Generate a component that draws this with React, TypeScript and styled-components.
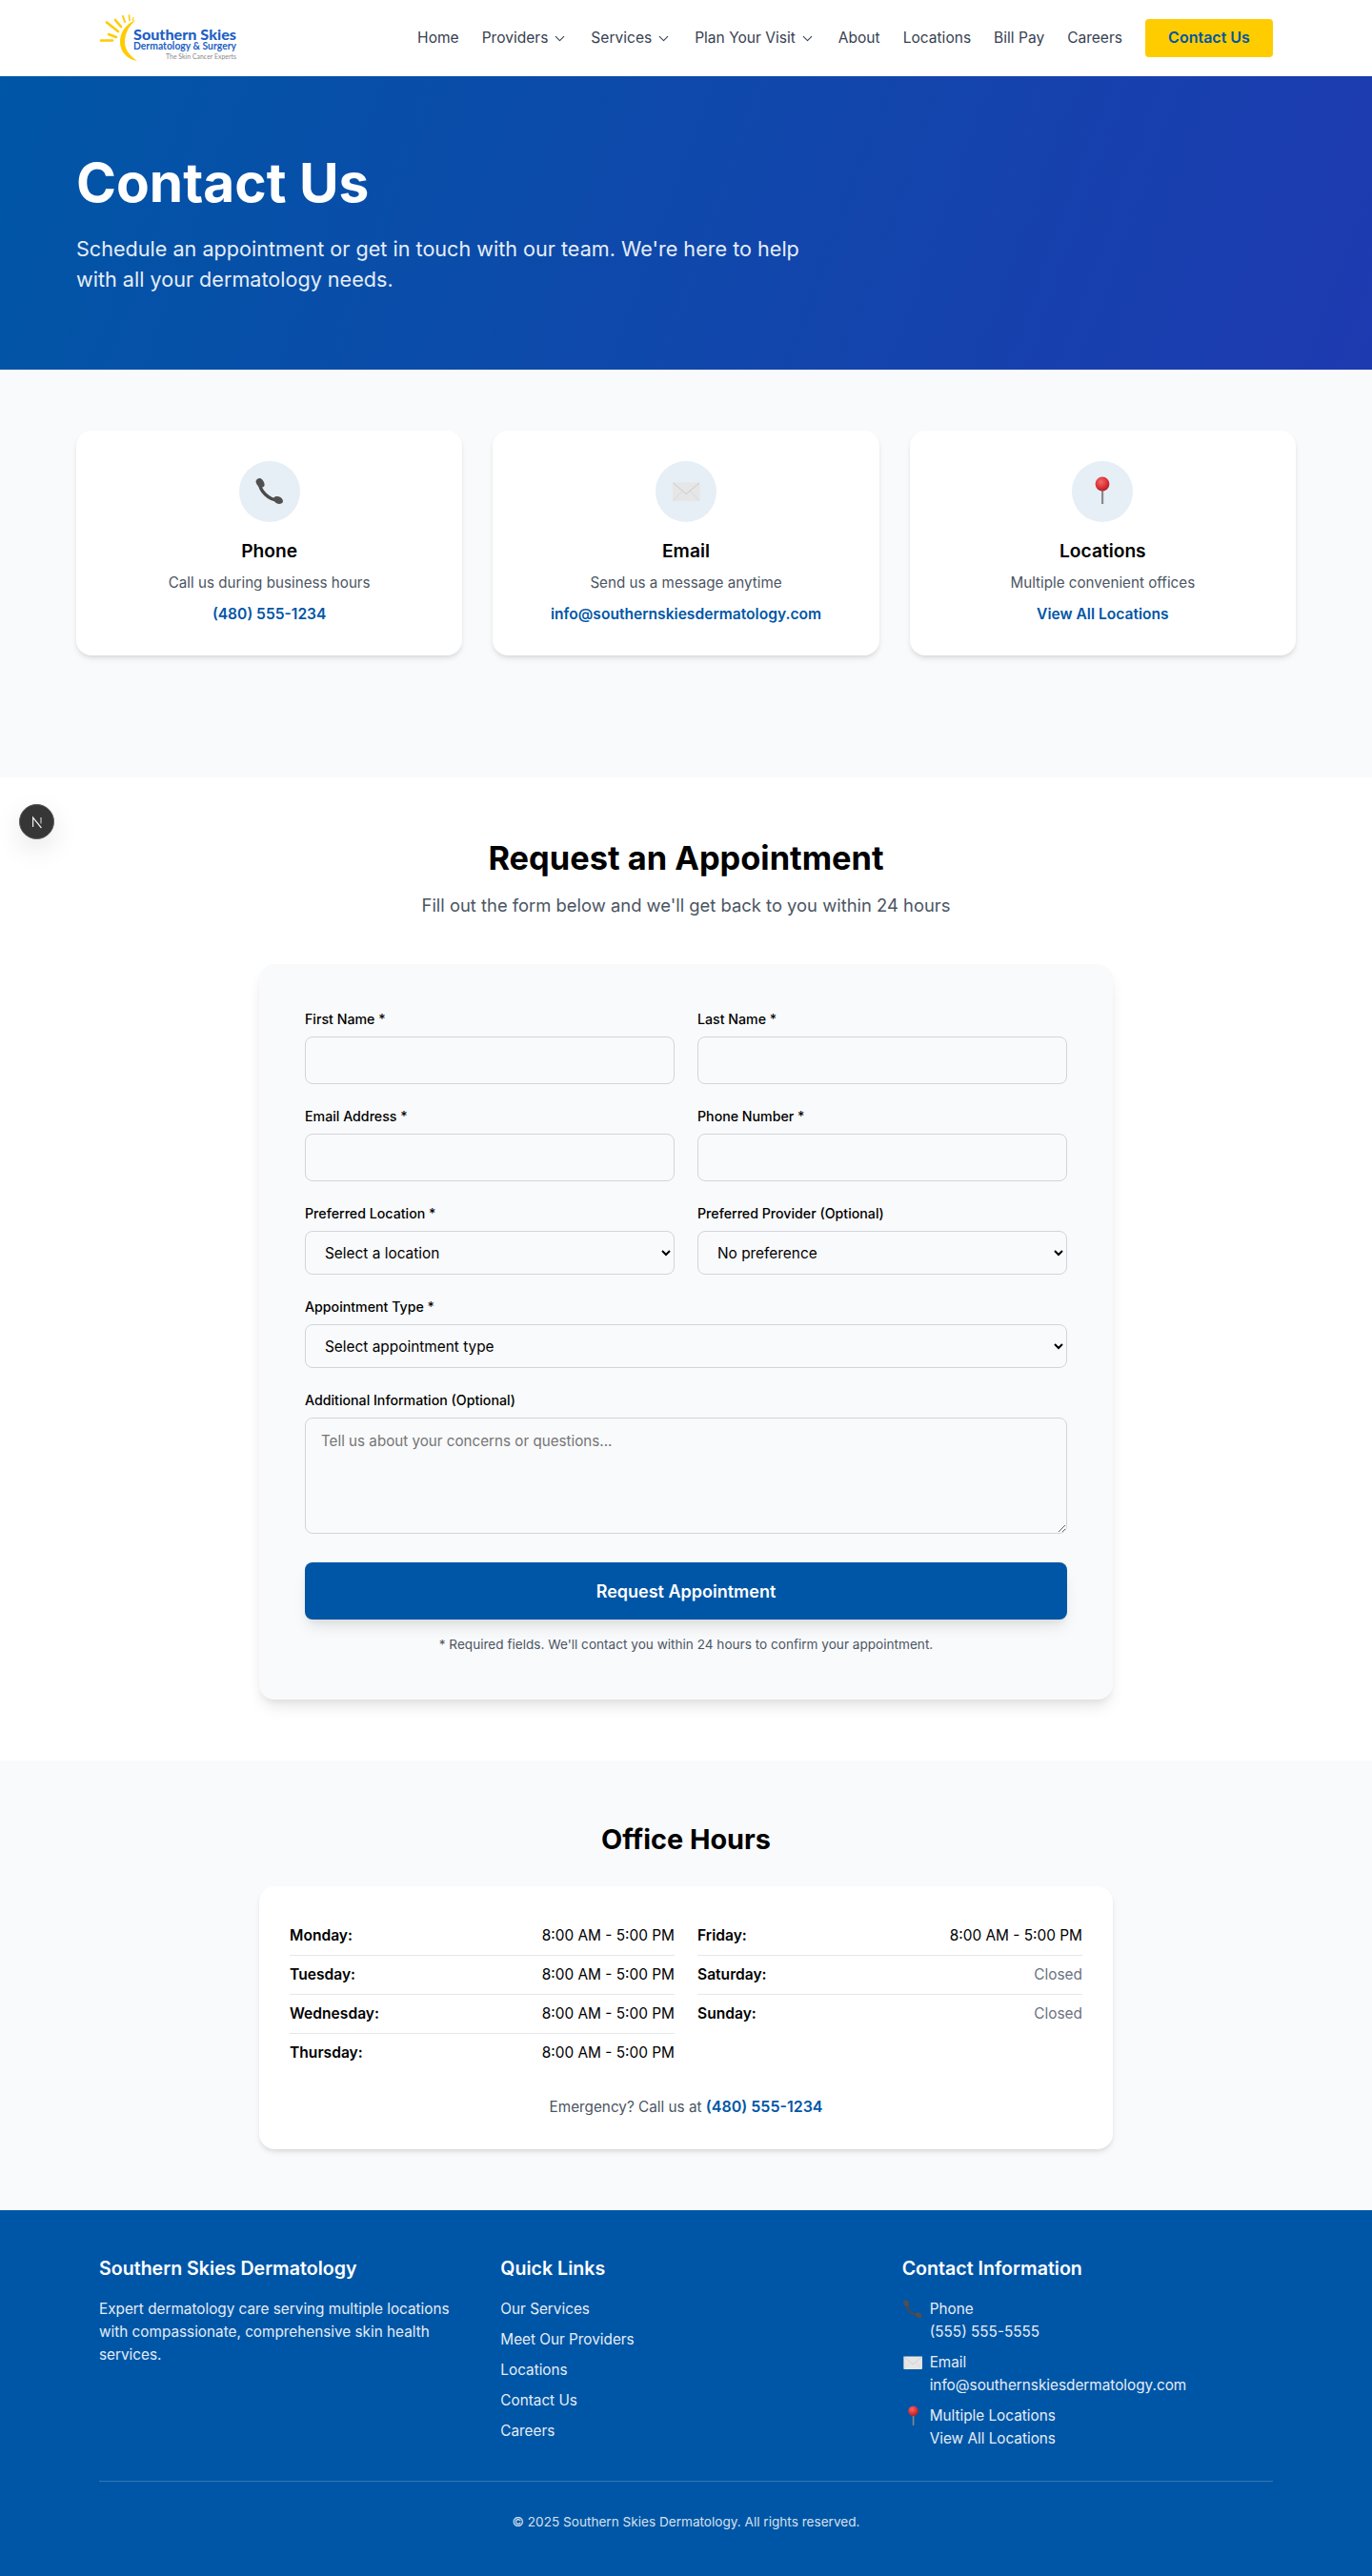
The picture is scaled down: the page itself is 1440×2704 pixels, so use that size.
import React from 'react';
import styled, { createGlobalStyle } from 'styled-components';
import { ChevronDown } from 'lucide-react';

const Global = createGlobalStyle`
  * { box-sizing: border-box; }
  html, body { margin: 0; padding: 0; }
  body {
    font-family: Inter, "Liberation Sans", sans-serif;
    font-size: 15.2px;
    line-height: 1.6;
    color: #000;
    background: #fff;
  }
  h1, h2, h3, h4, p, ul { margin: 0; padding: 0; }
  ul { list-style: none; }
  a { color: inherit; text-decoration: none; }
`;

const Page = styled.div`
  position: relative;
  width: 1440px;
`;

const Header = styled.header`
  height: 80px;
  background: #fff;
`;

const HeaderInner = styled.div`
  max-width: 1280px;
  height: 100%;
  margin: 0 auto;
  padding: 0 24px;
  display: flex;
  align-items: center;
  justify-content: space-between;
`;

const LogoSvg = styled.svg`
  display: block;
  width: 146px;
  height: 50px;
  overflow: visible;
`;

const Nav = styled.nav`
  display: flex;
  align-items: center;
  gap: 24px;
`;

const NavLink = styled.a`
  display: inline-flex;
  align-items: center;
  gap: 4px;
  font-size: 15.55px;
  color: #374151;
  svg { color: #374151; }
`;

const NavCta = styled.a`
  display: inline-flex;
  align-items: center;
  justify-content: center;
  width: 134px;
  height: 40px;
  background: #ffcc00;
  border-radius: 4px;
  color: #0056a6;
  font-size: 16px;
  font-weight: 600;
`;

const Hero = styled.section`
  height: 308px;
  padding-top: 67px;
  background: linear-gradient(110deg, #0056a6 0%, #1e3ab0 100%);
  color: #fff;
`;

const HeroInner = styled.div`
  max-width: 1280px;
  margin: 0 auto;
`;

const HeroTitle = styled.h1`
  font-size: 56.8px;
  font-weight: 700;
  line-height: 90px;
  margin-bottom: 8px;
`;

const HeroText = styled.p`
  max-width: 800px;
  font-size: 21.6px;
  line-height: 32px;
  color: #e5edf7;
`;

const MethodsSection = styled.section`
  background: #f9fafb;
  padding: 64px 0 128px;
`;

const MethodGrid = styled.div`
  width: 1280px;
  margin: 0 auto;
  display: grid;
  grid-template-columns: repeat(3, 1fr);
  gap: 32px;
`;

const MethodCard = styled.div`
  height: 236px;
  padding: 32px 32px 31px;
  background: #fff;
  border-radius: 16px;
  box-shadow: 0 4px 6px -1px rgba(0, 0, 0, 0.1), 0 2px 4px -1px rgba(0, 0, 0, 0.06);
  display: flex;
  flex-direction: column;
  align-items: center;
  text-align: center;
`;

const IconCircle = styled.div`
  flex: none;
  width: 64px;
  height: 64px;
  border-radius: 50%;
  background: #e6eef6;
  display: flex;
  align-items: center;
  justify-content: center;
  margin-bottom: 16px;
`;

const EmojiSvg = styled.svg<{ $size: number }>`
  display: block;
  flex: none;
  width: ${(p) => p.$size}px;
  height: ${(p) => p.$size}px;
`;

const MethodTitle = styled.h3`
  font-size: 19.2px;
  font-weight: 600;
  line-height: 28px;
  margin-bottom: 8px;
`;

const MethodText = styled.p`
  font-size: 15.2px;
  line-height: 24px;
  color: #4b5563;
  margin-bottom: 9px;
`;

const MethodLink = styled.a`
  font-size: 15.6px;
  line-height: 24px;
  font-weight: 600;
  color: #0056a6;
`;

const FormSection = styled.section`
  background: #fff;
  padding: 64px 0;
  text-align: center;
`;

const SectionTitle = styled.h2`
  font-size: 34.4px;
  font-weight: 700;
  line-height: 42px;
  margin-bottom: 14px;
`;

const SectionSub = styled.p`
  font-size: 18.4px;
  line-height: 29px;
  color: #4b5563;
  margin-bottom: 47px;
`;

const FormCard = styled.form`
  width: 896px;
  margin: 0 auto;
  padding: 48px;
  background: #f9fafb;
  border-radius: 16px;
  text-align: left;
  box-shadow: 0 10px 15px -3px rgba(0, 0, 0, 0.1), 0 4px 6px -2px rgba(0, 0, 0, 0.05);
`;

const FieldGrid = styled.div`
  display: grid;
  grid-template-columns: 1fr 1fr;
  gap: 24px;
`;

const Field = styled.div<{ $wide?: boolean }>`
  grid-column: ${(p) => (p.$wide ? '1 / -1' : 'auto')};
`;

const Label = styled.label`
  display: block;
  font-size: 14.2px;
  font-weight: 500;
  line-height: 20px;
  margin-bottom: 8px;
`;

const controlBase = `
  display: block;
  width: 100%;
  border: 1px solid #d1d5db;
  border-radius: 8px;
  background: #f9fafb;
  color: #000;
  font-family: inherit;
  font-size: 15.2px;
  padding: 12px 16px;
`;

const TextInput = styled.input`
  ${controlBase}
  height: 50px;
`;

const SelectInput = styled.select`
  ${controlBase}
  font-size: 15.4px;
  height: 46px;
`;

const TextArea = styled.textarea`
  ${controlBase}
  height: 122px;
  line-height: 24px;
  resize: vertical;
  &::placeholder { color: #757575; }
`;

const SubmitButton = styled.button`
  display: block;
  width: 100%;
  height: 60px;
  margin-top: 30px;
  border: 0;
  border-radius: 8px;
  background: #0056a6;
  color: #fff;
  font-family: inherit;
  font-size: 18px;
  font-weight: 600;
  box-shadow: 0 10px 15px -3px rgba(0, 0, 0, 0.1), 0 4px 6px -2px rgba(0, 0, 0, 0.05);
`;

const FormNote = styled.p`
  margin-top: 16px;
  font-size: 13.6px;
  line-height: 20px;
  color: #4b5563;
  text-align: center;
`;

const HoursSection = styled.section`
  background: #f9fafb;
  padding: 64px 0;
`;

const HoursTitle = styled.h2`
  font-size: 28.8px;
  font-weight: 700;
  line-height: 38px;
  text-align: center;
  margin-bottom: 30px;
`;

const HoursCard = styled.div`
  width: 896px;
  margin: 0 auto;
  padding: 32px;
  background: #fff;
  border-radius: 16px;
  box-shadow: 0 4px 6px -1px rgba(0, 0, 0, 0.1), 0 2px 4px -1px rgba(0, 0, 0, 0.06);
`;

const HoursColumns = styled.div`
  display: grid;
  grid-template-columns: 1fr 1fr;
  column-gap: 24px;
`;

const HoursRow = styled.div<{ $last?: boolean }>`
  display: flex;
  justify-content: space-between;
  padding: 8px 0;
  line-height: 24px;
  font-size: 15.4px;
  border-bottom: ${(p) => (p.$last ? '0' : '1px solid #e5e7eb')};
`;

const Day = styled.span`
  font-weight: 600;
  font-size: 15.6px;
`;

const Time = styled.span<{ $closed?: boolean }>`
  color: ${(p) => (p.$closed ? '#6b7280' : '#000')};
`;

const Emergency = styled.p`
  margin-top: 24px;
  font-size: 15.3px;
  line-height: 24px;
  color: #4b5563;
  text-align: center;
  a { font-weight: 600; font-size: 16px; color: #0056a6; }
`;

const Footer = styled.footer`
  height: 385px;
  padding-top: 47px;
  background: #0056a6;
  color: #fff;
`;

const FooterInner = styled.div`
  max-width: 1280px;
  margin: 0 auto;
  padding: 0 24px;
`;

const FooterGrid = styled.div`
  display: grid;
  grid-template-columns: repeat(3, 1fr);
  gap: 32px;
  padding-bottom: 32px;
  border-bottom: 1px solid rgba(255, 255, 255, 0.2);
`;

const FooterHeading = styled.h4`
  font-size: 19.6px;
  font-weight: 600;
  line-height: 29px;
  margin-bottom: 16px;
`;

const FooterText = styled.p`
  font-size: 15.3px;
  line-height: 24px;
  color: #e5edf7;
`;

const FooterLinks = styled.ul`
  display: flex;
  flex-direction: column;
  gap: 8px;
  font-size: 15.3px;
  line-height: 24px;
  color: #e5edf7;
`;

const ContactList = styled.ul`
  display: flex;
  flex-direction: column;
  gap: 8px;
  font-size: 15.3px;
  line-height: 24px;
  color: #e5edf7;
`;

const ContactItem = styled.li`
  display: flex;
  gap: 7px;
`;

const ContactIcon = styled.span`
  display: block;
  flex: none;
  width: 22px;
  padding-top: 1px;
`;

const Copyright = styled.p`
  margin-top: 32px;
  font-size: 13.6px;
  line-height: 21px;
  color: #d5e0ee;
  text-align: center;
`;

const DevBadge = styled.div`
  position: absolute;
  left: 20px;
  top: 844px;
  width: 37px;
  height: 37px;
  border-radius: 50%;
  background: #363636;
  border: 1px solid #5a5a5a;
  display: flex;
  align-items: center;
  justify-content: center;
  box-shadow: 0 10px 28px rgba(0, 0, 0, 0.1);
`;

const Logo = () => (
  <LogoSvg viewBox="13 10 146 50" role="img" aria-label="Southern Skies Dermatology & Surgery">
    <path d="M52 16 C40 20 35 30 35 39 C35 49 42 57 53 59 C46 54 40 48 40 39 C40 30 45 21 52 16 Z" fill="#ffcc00" />
    <g stroke="#ffcc00" strokeWidth="2.6" strokeLinecap="round" fill="none">
      <path d="M15 37.5 L27 37.5" />
      <path d="M23 31 L31 34" />
      <path d="M21 18.5 L33 28" />
      <path d="M30 16 L36 23" />
      <path d="M38 12 L40 18" strokeWidth="2" />
      <path d="M44.5 11 L45 16.5" strokeWidth="1.6" />
      <path d="M49 13.5 L48.5 16.5" strokeWidth="1.2" />
    </g>
    <text x="49" y="37" fontFamily="Lato, sans-serif" fontWeight="900" fontSize="15" fill="#1d5fc4" textLength="108" lengthAdjust="spacingAndGlyphs">Southern Skies</text>
    <text x="49" y="47" fontFamily="Lato, sans-serif" fontWeight="700" fontSize="10.5" fill="#1d5fc4" textLength="108" lengthAdjust="spacingAndGlyphs">Dermatology &amp; Surgery</text>
    <text x="83" y="57" fontFamily="Lato, sans-serif" fontSize="7.5" fill="#8a8a8a" textLength="74" lengthAdjust="spacingAndGlyphs">The Skin Cancer Experts</text>
  </LogoSvg>
);

const PhoneEmoji = ({ size }: { size: number }) => (
  <EmojiSvg $size={size} viewBox="16 16 32 32" aria-hidden="true">
    <path d="M21.5 23 C21.5 31 31 41 41 41" fill="none" stroke="#4a4a4a" strokeWidth="3.4" strokeLinecap="round" />
    <path d="M17.6 22 C17.2 19 21 17.4 23 18.4 C25 19.4 27 23 26.6 25.6 C26.2 27.4 23 28.4 21.6 27.6 C19.4 26.2 18 24 17.6 22 Z" fill="#505050" />
    <path d="M36.4 38.4 C38 36.6 41 36.6 43.4 38 C45.6 39.4 46.6 42 45.6 43.6 C44.4 45.4 41 45.4 38.8 44 C36.6 42.4 35.6 39.8 36.4 38.4 Z" fill="#505050" />
  </EmojiSvg>
);

const MailEmoji = ({ size }: { size: number }) => (
  <EmojiSvg $size={size} viewBox="16 16 32 32" aria-hidden="true">
    <rect x="18" y="22.5" width="28.5" height="19.5" rx="1.2" fill="#e6e6e6" />
    <path d="M18.5 23 L32.2 34.5 L46 23" fill="none" stroke="#c9c9c9" strokeWidth="1" />
    <path d="M18.5 41.5 L28 31.5 M46 41.5 L36.5 31.5" fill="none" stroke="#d6d6d6" strokeWidth="0.8" />
  </EmojiSvg>
);

const PinEmoji = ({ size }: { size: number }) => (
  <EmojiSvg $size={size} viewBox="16 16 32 32" aria-hidden="true">
    <defs>
      <radialGradient id="pinBall" cx="0.4" cy="0.35" r="0.7">
        <stop offset="0" stopColor="#f26a6a" />
        <stop offset="0.6" stopColor="#dc3236" />
        <stop offset="1" stopColor="#a81f26" />
      </radialGradient>
    </defs>
    <rect x="31" y="30" width="2.2" height="15" fill="#8a8a8a" />
    <circle cx="32" cy="24" r="7.4" fill="url(#pinBall)" />
  </EmojiSvg>
);

const leftHours = [
  ['Monday:', '8:00 AM - 5:00 PM'],
  ['Tuesday:', '8:00 AM - 5:00 PM'],
  ['Wednesday:', '8:00 AM - 5:00 PM'],
  ['Thursday:', '8:00 AM - 5:00 PM'],
];
const rightHours = [
  ['Friday:', '8:00 AM - 5:00 PM'],
  ['Saturday:', 'Closed'],
  ['Sunday:', 'Closed'],
];

const HoursList = ({ rows }: { rows: string[][] }) => (
  <div>
    {rows.map(([d, t], i) => (
      <HoursRow key={d} $last={i === rows.length - 1}>
        <Day>{d}</Day>
        <Time $closed={t === 'Closed'}>{t}</Time>
      </HoursRow>
    ))}
  </div>
);

const methods = [
  { Icon: PhoneEmoji, title: 'Phone', text: 'Call us during business hours', link: '(480) 555-1234' },
  { Icon: MailEmoji, title: 'Email', text: 'Send us a message anytime', link: 'info@southernskiesdermatology.com' },
  { Icon: PinEmoji, title: 'Locations', text: 'Multiple convenient offices', link: 'View All Locations' },
];

export default function App() {
  return (
    <Page>
      <Global />
      <Header>
        <HeaderInner>
          <Logo />
          <Nav>
            <NavLink href="#">Home</NavLink>
            <NavLink href="#">Providers <ChevronDown size={17} strokeWidth={1.5} /></NavLink>
            <NavLink href="#">Services <ChevronDown size={17} strokeWidth={1.5} /></NavLink>
            <NavLink href="#">Plan Your Visit <ChevronDown size={17} strokeWidth={1.5} /></NavLink>
            <NavLink href="#">About</NavLink>
            <NavLink href="#">Locations</NavLink>
            <NavLink href="#">Bill Pay</NavLink>
            <NavLink href="#">Careers</NavLink>
            <NavCta href="#">Contact Us</NavCta>
          </Nav>
        </HeaderInner>
      </Header>

      <Hero>
        <HeroInner>
          <HeroTitle>Contact Us</HeroTitle>
          <HeroText>Schedule an appointment or get in touch with our team. We're here to help with all your dermatology needs.</HeroText>
        </HeroInner>
      </Hero>

      <MethodsSection>
        <MethodGrid>
          {methods.map((m) => (
            <MethodCard key={m.title}>
              <IconCircle><m.Icon size={32} /></IconCircle>
              <MethodTitle>{m.title}</MethodTitle>
              <MethodText>{m.text}</MethodText>
              <MethodLink href="#">{m.link}</MethodLink>
            </MethodCard>
          ))}
        </MethodGrid>
      </MethodsSection>

      <FormSection>
        <SectionTitle>Request an Appointment</SectionTitle>
        <SectionSub>Fill out the form below and we'll get back to you within 24 hours</SectionSub>
        <FormCard>
          <FieldGrid>
            <Field><Label>First Name *</Label><TextInput /></Field>
            <Field><Label>Last Name *</Label><TextInput /></Field>
            <Field><Label>Email Address *</Label><TextInput /></Field>
            <Field><Label>Phone Number *</Label><TextInput /></Field>
            <Field><Label>Preferred Location *</Label><SelectInput><option>Select a location</option></SelectInput></Field>
            <Field><Label>Preferred Provider (Optional)</Label><SelectInput><option>No preference</option></SelectInput></Field>
            <Field $wide><Label>Appointment Type *</Label><SelectInput><option>Select appointment type</option></SelectInput></Field>
            <Field $wide><Label>Additional Information (Optional)</Label><TextArea placeholder="Tell us about your concerns or questions..." /></Field>
          </FieldGrid>
          <SubmitButton type="button">Request Appointment</SubmitButton>
          <FormNote>* Required fields. We'll contact you within 24 hours to confirm your appointment.</FormNote>
        </FormCard>
      </FormSection>

      <HoursSection>
        <HoursTitle>Office Hours</HoursTitle>
        <HoursCard>
          <HoursColumns>
            <HoursList rows={leftHours} />
            <HoursList rows={rightHours} />
          </HoursColumns>
          <Emergency>Emergency? Call us at <a href="#">(480) 555-1234</a></Emergency>
        </HoursCard>
      </HoursSection>

      <Footer>
        <FooterInner>
          <FooterGrid>
            <div>
              <FooterHeading>Southern Skies Dermatology</FooterHeading>
              <FooterText>Expert dermatology care serving multiple locations with compassionate, comprehensive skin health services.</FooterText>
            </div>
            <div>
              <FooterHeading>Quick Links</FooterHeading>
              <FooterLinks>
                {['Our Services', 'Meet Our Providers', 'Locations', 'Contact Us', 'Careers'].map((l) => (
                  <li key={l}><a href="#">{l}</a></li>
                ))}
              </FooterLinks>
            </div>
            <div>
              <FooterHeading>Contact Information</FooterHeading>
              <ContactList>
                <ContactItem><ContactIcon><PhoneEmoji size={22} /></ContactIcon><div>Phone<br />(555) 555-5555</div></ContactItem>
                <ContactItem><ContactIcon><MailEmoji size={22} /></ContactIcon><div>Email<br />info@southernskiesdermatology.com</div></ContactItem>
                <ContactItem><ContactIcon><PinEmoji size={23} /></ContactIcon><div>Multiple Locations<br />View All Locations</div></ContactItem>
              </ContactList>
            </div>
          </FooterGrid>
          <Copyright>© 2025 Southern Skies Dermatology. All rights reserved.</Copyright>
        </FooterInner>
      </Footer>

      <DevBadge>
        <svg width="16" height="16" viewBox="0 0 16 16" aria-hidden="true" fill="none" stroke="#f0f0f0" strokeWidth="1.2">
          <path d="M3.6 13 V3.2 L12.4 14" />
          <path d="M12 3 V9.5" stroke="#c8c8c8" />
        </svg>
      </DevBadge>
    </Page>
  );
}
